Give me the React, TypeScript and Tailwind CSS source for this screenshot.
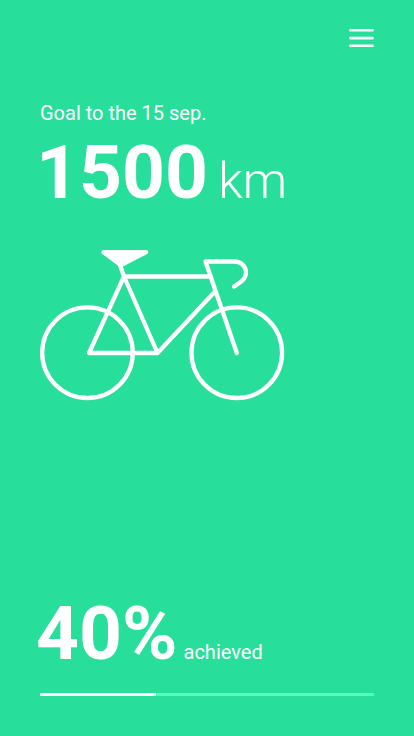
export default function App() {
  return (
    <main className="flex min-h-screen flex-col bg-[#28de9b] px-10 pb-10 font-['Roboto',sans-serif] text-white">
      <header className="flex justify-end pt-7">
        <button type="button" aria-label="Menu" className="h-5 w-[25px]">
          <svg viewBox="0 0 25 20" className="h-5 w-[25px]" stroke="white" strokeWidth="2.6" strokeLinecap="round" aria-hidden="true">
            <path d="M1.3 2.3H23.7M1.3 10.1H23.7M1.3 17.7H23.7" />
          </svg>
        </button>
      </header>
      <section className="pt-[52px]">
        <p className="text-[20px] leading-[26px]">Goal to the 15 sep.</p>
        <h1 className="-ml-1 mt-2.5 flex items-baseline gap-2.5">
          <span className="text-[75px] font-bold leading-[72px]">1500</span>
          <span className="text-[50px] font-light leading-[50px]">km</span>
        </h1>
      </section>
      <svg viewBox="0 0 246 152" className="mt-[42px] w-[246px]" fill="none" stroke="white" strokeWidth="4.3" strokeLinecap="round" strokeLinejoin="round" role="img" aria-label="Bicycle">
        <circle cx="47.5" cy="102.7" r="45.3" />
        <circle cx="196.8" cy="102.7" r="45.3" />
        <path d="M84 26.5 49 103H117.5L175 41.5M80 15 84 26.5 117.5 103M84 26.5H171M196.8 103 165.5 11.5H194C202 11.5 206 17 206 22.5C206 29 201 32 194 36.5" />
        <path d="M63.5 2.2H106.2L82 14.5H80Z" fill="white" />
      </svg>
      <section className="mt-auto">
        <p className="-ml-1 flex items-baseline gap-1.5">
          <span className="text-[75px] font-bold leading-[72px]">40%</span>
          <span className="text-[20px] leading-[26px]">achieved</span>
        </p>
        <div role="progressbar" aria-label="Goal achieved" aria-valuenow={40} className="mt-6 h-[3px] bg-[#52ffb8]">
          <div className="h-full w-[34.7%] bg-white" />
        </div>
      </section>
    </main>
  );
}
